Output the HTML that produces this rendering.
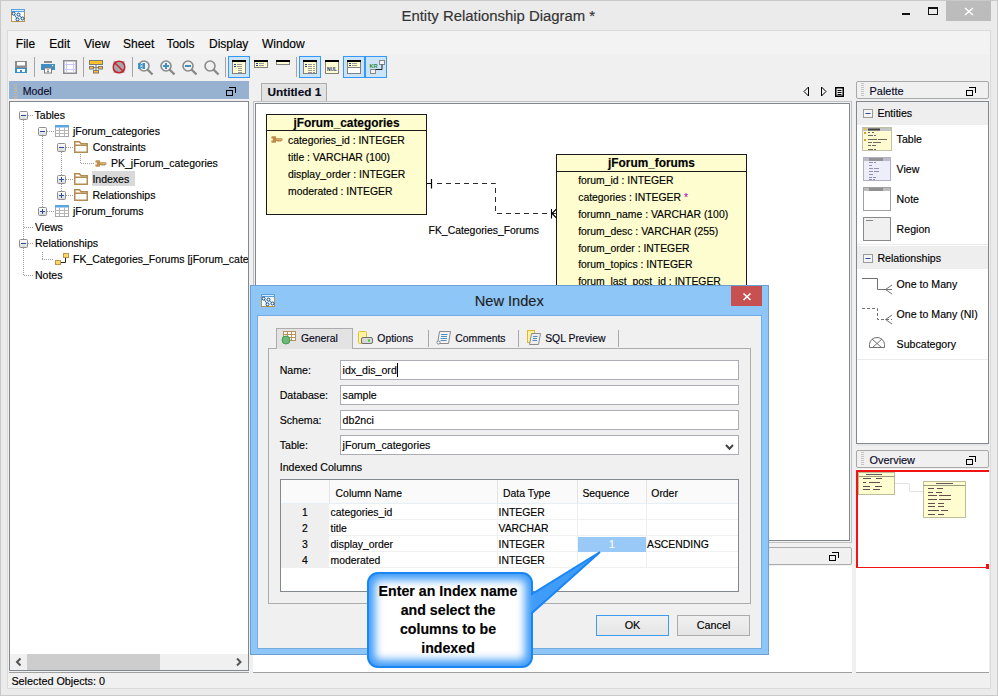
<!DOCTYPE html>
<html><head><meta charset="utf-8">
<style>
*{box-sizing:border-box;margin:0;padding:0}
html,body{width:998px;height:696px;overflow:hidden;background:#ebebeb;font-family:"Liberation Sans",sans-serif;font-size:11px;color:#000}
.a{position:absolute}
.t{position:absolute;white-space:nowrap;-webkit-text-stroke:0.15px currentColor}
svg{overflow:visible}
</style></head><body>

<div class="a" style="left:0px;top:0px;width:998px;height:696px;background:#ebebeb;border:1px solid #c9c9c9"></div>
<div class="a" style="left:7px;top:30px;width:984px;height:659px;background:#f0f0f0;border:1px solid #dadada"></div>
<div class="a" style="left:8px;top:31px;width:982px;height:23px;background:#f3f3f3"></div>
<svg class="a" style="left:11px;top:9px;" width="14" height="13" viewBox="0 0 14 13"><rect x="0.5" y="0.5" width="13" height="12" fill="#f4fbff" stroke="#b8944e"/><rect x="0" y="0" width="14" height="3" fill="#5aa0dc"/><rect x="1" y="1" width="12" height="1" fill="#d6ecfc"/><path d="M3 5 L6.5 10.5 M7.5 6 L11.5 9.5" stroke="#0d4a8a" stroke-width="0.8"/><g fill="#fff" stroke="#0d4a8a" stroke-width="1"><circle cx="2.6" cy="4.6" r="1.5"/><circle cx="7.5" cy="5.6" r="1.5"/><circle cx="6.5" cy="10.4" r="1.5"/><circle cx="11.5" cy="9.5" r="1.5"/></g></svg>
<div class="t" style="left:401.5px;top:7.44px;font-size:14.9px;line-height:19px;color:#333">Entity Relationship Diagram *</div>
<div class="a" style="left:902px;top:13px;width:8px;height:2px;background:#111"></div>
<div class="a" style="left:928px;top:7px;width:10px;height:8px;border:1px solid #111;border-top-width:2px"></div>
<div class="a" style="left:946px;top:1px;width:45px;height:20px;background:#bcbcbc"></div>
<svg class="a" style="left:964px;top:7px;" width="10" height="9" viewBox="0 0 10 9"><path d="M1 1 L9 8 M9 1 L1 8" stroke="#fff" stroke-width="1.4"/></svg>
<div class="t" style="left:15.8px;top:36.24px;font-size:12px;line-height:16px;">File</div>
<div class="t" style="left:49.3px;top:36.24px;font-size:12px;line-height:16px;">Edit</div>
<div class="t" style="left:84px;top:36.24px;font-size:12px;line-height:16px;">View</div>
<div class="t" style="left:123px;top:36.24px;font-size:12px;line-height:16px;">Sheet</div>
<div class="t" style="left:166.4px;top:36.24px;font-size:12px;line-height:16px;">Tools</div>
<div class="t" style="left:209px;top:36.24px;font-size:12px;line-height:16px;">Display</div>
<div class="t" style="left:262px;top:36.24px;font-size:12px;line-height:16px;">Window</div>
<div class="a" style="left:34px;top:57px;width:1px;height:20px;background:#a5a5a5"></div>
<div class="a" style="left:83px;top:57px;width:1px;height:20px;background:#a5a5a5"></div>
<div class="a" style="left:132px;top:57px;width:1px;height:20px;background:#a5a5a5"></div>
<div class="a" style="left:225px;top:57px;width:1px;height:20px;background:#a5a5a5"></div>
<div class="a" style="left:296px;top:57px;width:1px;height:20px;background:#a5a5a5"></div>
<svg class="a" style="left:15px;top:61px;" width="12" height="12" viewBox="0 0 12 12"><rect x="0" y="0" width="12" height="7" fill="#8c8c8c"/><rect x="2" y="1" width="8" height="3.5" fill="#fff" rx="0.5"/><rect x="0" y="7" width="12" height="5" fill="#3e8fc7"/><rect x="2" y="8" width="8" height="3" fill="#fff"/><rect x="5" y="9" width="2" height="2" fill="#3e8fc7"/></svg>
<svg class="a" style="left:41px;top:61px;" width="14" height="12" viewBox="0 0 14 12"><rect x="3" y="0" width="8" height="2" fill="#8c8c8c"/><rect x="0" y="3" width="14" height="6" fill="#3e8fc7"/><rect x="11" y="4" width="1.2" height="1.2" fill="#fff"/><rect x="3.5" y="7" width="7" height="5" fill="#fff" stroke="#7a7a7a" stroke-width="1"/><rect x="6" y="8.5" width="2" height="0.8" fill="#555"/><rect x="6" y="10.3" width="2" height="0.8" fill="#555"/></svg>
<svg class="a" style="left:63px;top:60px;" width="14" height="14" viewBox="0 0 14 14"><rect x="0.75" y="0.75" width="12.5" height="12.5" fill="#fff" stroke="#8a8a8a" stroke-width="1.5"/><path d="M3.5 1 V13 M10.5 1 V13 M1 4.5 H13 M1 9.5 H13" stroke="#c8c8ff" stroke-width="1"/></svg>
<svg class="a" style="left:89px;top:60px;" width="14" height="13" viewBox="0 0 14 13"><rect x="0.5" y="0.5" width="13" height="4" fill="#ffc125" stroke="#7a7a7a"/><rect x="0.5" y="6.5" width="4" height="2.5" fill="#ffc125" stroke="#7a7a7a"/><rect x="9.5" y="6.5" width="4" height="2.5" fill="#ffc125" stroke="#7a7a7a"/><rect x="4.5" y="10.5" width="5" height="2.5" fill="#ffc125" stroke="#7a7a7a"/><path d="M7 5 V10.5 M4.5 7.7 H9.5" stroke="#7a7a7a"/></svg>
<svg class="a" style="left:112px;top:60px;" width="14" height="14" viewBox="0 0 14 14"><rect x="1.5" y="1" width="11" height="12" fill="#a8a8a8"/><circle cx="7" cy="7" r="5.8" fill="none" stroke="#c8202f" stroke-width="1.5"/><path d="M3 3 L11 11" stroke="#c8202f" stroke-width="1.5"/></svg>
<svg class="a" style="left:136.9px;top:58.7px;" width="18" height="18" viewBox="0 0 18 18"><circle cx="7" cy="7" r="5" fill="none" stroke="#8a8a8a" stroke-width="1.6"/><path d="M10.5 10.5 L15.5 15.5" stroke="#8a8a8a" stroke-width="2.4"/><rect x="1" y="4" width="2.5" height="6" fill="#3d8fc6"/><rect x="5.5" y="4" width="2.5" height="6" fill="#3d8fc6"/><rect x="3.5" y="5" width="2" height="1.3" fill="#3d8fc6"/><rect x="3.5" y="7.7" width="2" height="1.3" fill="#3d8fc6"/></svg>
<svg class="a" style="left:159px;top:58.7px;" width="18" height="18" viewBox="0 0 18 18"><circle cx="7" cy="7" r="5" fill="none" stroke="#8a8a8a" stroke-width="1.6"/><path d="M10.5 10.5 L15.5 15.5" stroke="#8a8a8a" stroke-width="2.4"/><path d="M7 4 V10 M4 7 H10" stroke="#3d8fc6" stroke-width="2"/></svg>
<svg class="a" style="left:180.9px;top:58.7px;" width="18" height="18" viewBox="0 0 18 18"><circle cx="7" cy="7" r="5" fill="none" stroke="#8a8a8a" stroke-width="1.6"/><path d="M10.5 10.5 L15.5 15.5" stroke="#8a8a8a" stroke-width="2.4"/><path d="M4 7 H10" stroke="#3d8fc6" stroke-width="2"/></svg>
<svg class="a" style="left:202.7px;top:58.7px;" width="18" height="18" viewBox="0 0 18 18"><circle cx="7" cy="7" r="5" fill="none" stroke="#8a8a8a" stroke-width="1.6"/><path d="M10.5 10.5 L15.5 15.5" stroke="#8a8a8a" stroke-width="2.4"/></svg>
<div class="a" style="left:228px;top:56px;width:22px;height:22px;background:#cce4f7;border:1px solid #3399ff"></div>
<div class="a" style="left:299px;top:56px;width:22px;height:22px;background:#cce4f7;border:1px solid #3399ff"></div>
<div class="a" style="left:343px;top:56px;width:22px;height:22px;background:#cce4f7;border:1px solid #3399ff"></div>
<div class="a" style="left:365px;top:56px;width:22px;height:22px;background:#cce4f7;border:1px solid #3399ff"></div>
<svg class="a" style="left:232px;top:60px;" width="14" height="14" viewBox="0 0 14 14"><rect x="0.5" y="0.5" width="13" height="13" fill="#fffbd0" stroke="#808080"/><rect x="0" y="0" width="14" height="2" fill="#000"/><rect x="2" y="4" width="2" height="1" fill="#1f3f8f"/><rect x="2" y="6" width="2" height="1" fill="#1f3f8f"/><path d="M5 4.5 H10 M5 6.5 H10 M6 8.5 H10 M6 10.5 H10 M6 12.5 H10" stroke="#999" stroke-width="1"/></svg>
<svg class="a" style="left:254px;top:60px;" width="14" height="8" viewBox="0 0 14 8"><rect x="0.5" y="0.5" width="13" height="7" fill="#fffbd0" stroke="#808080"/><rect x="0" y="0" width="14" height="2" fill="#000"/><rect x="2" y="3" width="2" height="1" fill="#1f3f8f"/><rect x="2" y="5" width="2" height="1" fill="#1f3f8f"/><path d="M5 3.5 H10 M5 5.5 H10" stroke="#999" stroke-width="1"/></svg>
<svg class="a" style="left:276px;top:60px;" width="14" height="5" viewBox="0 0 14 5"><rect x="0.5" y="0.5" width="13" height="4" fill="#fffbd0" stroke="#808080"/><rect x="0" y="0" width="14" height="2" fill="#000"/></svg>
<svg class="a" style="left:303px;top:60px;" width="14" height="14" viewBox="0 0 14 14"><rect x="0.5" y="0.5" width="13" height="13" fill="#fffbd0" stroke="#808080"/><rect x="0" y="0" width="14" height="2" fill="#000"/><path d="M5 4.5 H9 M5 6.5 H9 M5 8.5 H9 M5 10.5 H9 M5 12.5 H9 M10 4.5 H12 M10 6.5 H12 M10 8.5 H12 M10 10.5 H12 M10 12.5 H12" stroke="#999" stroke-width="1"/><rect x="2" y="4" width="2" height="1" fill="#1f3f8f"/><rect x="2" y="6" width="2" height="1" fill="#1f3f8f"/></svg>
<svg class="a" style="left:325px;top:60px;" width="14" height="14" viewBox="0 0 14 14"><rect x="0.5" y="0.5" width="13" height="13" fill="#fffbd0" stroke="#808080"/><rect x="0" y="0" width="14" height="2" fill="#000"/><text x="2" y="10.5" font-size="6" font-weight="bold" textLength="10" lengthAdjust="spacingAndGlyphs" fill="#17306f" font-family="Liberation Sans">NUL</text></svg>
<svg class="a" style="left:347px;top:60px;" width="14" height="14" viewBox="0 0 14 14"><rect x="0.5" y="0.5" width="13" height="13" fill="#fff" stroke="#808080"/><rect x="0.5" y="0.5" width="13" height="7" fill="#fffbd0" stroke="#808080"/><rect x="0" y="0" width="14" height="2" fill="#000"/><rect x="2" y="3" width="2" height="1" fill="#1f3f8f"/><rect x="2" y="5" width="2" height="1" fill="#1f3f8f"/><path d="M5 3.5 H10 M5 5.5 H10" stroke="#999" stroke-width="1"/></svg>
<svg class="a" style="left:369px;top:59px;" width="17" height="16" viewBox="0 0 17 16"><rect x="10.5" y="1.5" width="5" height="4" fill="#f4f4f4" stroke="#888"/><rect x="1.5" y="10.5" width="5" height="4" fill="#f4f4f4" stroke="#888"/><path d="M13 5.5 V10.5 H6.5" fill="none" stroke="#222" stroke-width="1"/><text x="0.5" y="8.5" font-size="6" font-weight="bold" textLength="8" lengthAdjust="spacingAndGlyphs" fill="#2a8a2a" font-family="Liberation Sans">KR</text></svg>
<div class="a" style="left:9px;top:81px;width:240px;height:18px;background:#97b2d1"></div>
<svg class="a" style="left:14px;top:84px;" width="3" height="15" viewBox="0 0 3 15"><rect x="0" y="0" width="3" height="1" fill="#c8b89a"/><rect x="0" y="2" width="3" height="1" fill="#c8b89a"/><rect x="0" y="4" width="3" height="1" fill="#c8b89a"/><rect x="0" y="6" width="3" height="1" fill="#c8b89a"/><rect x="0" y="8" width="3" height="1" fill="#c8b89a"/><rect x="0" y="10" width="3" height="1" fill="#c8b89a"/><rect x="0" y="12" width="3" height="1" fill="#c8b89a"/><rect x="0" y="14" width="3" height="1" fill="#c8b89a"/></svg>
<div class="t" style="left:22.8px;top:84.23px;font-size:10.6px;line-height:14px;color:#0a0a28">Model</div>
<svg class="a" style="left:226px;top:87px;" width="11" height="10" viewBox="0 0 11 10"><path d="M3 0 H10 V6 H9 V1 H3 Z" fill="#000"/><path d="M0 3 H7 V9 H0 Z M1 4 V8 H6 V4 Z" fill="#000" fill-rule="evenodd"/></svg>
<div class="a" style="left:9px;top:101px;width:240px;height:570px;background:#fff;border:1px solid #828790"></div>
<div class="a" style="left:10px;top:654px;width:238px;height:16px;background:#f0f0f0"></div>
<div class="a" style="left:27px;top:654px;width:133px;height:16px;background:#cdcdcd"></div>
<svg class="a" style="left:14px;top:657px;" width="10" height="10" viewBox="0 0 10 10"><path d="M6.5 1.5 L3 5 L6.5 8.5" fill="none" stroke="#555" stroke-width="2"/></svg>
<svg class="a" style="left:234px;top:657px;" width="10" height="10" viewBox="0 0 10 10"><path d="M3 1.5 L6.5 5 L3 8.5" fill="none" stroke="#555" stroke-width="2"/></svg>
<div class="a" style="left:9px;top:672px;width:240px;height:1px;background:#a0a0a0"></div>
<div class="t" style="left:11.4px;top:673.56px;font-size:10.8px;line-height:14px;">Selected Objects: 0</div>
<svg class="a" style="left:23px;top:120px;" width="1" height="156" viewBox="0 0 1 156"><rect x="0" y="0" width="1" height="1" fill="#a0a0a0"/><rect x="0" y="2" width="1" height="1" fill="#a0a0a0"/><rect x="0" y="4" width="1" height="1" fill="#a0a0a0"/><rect x="0" y="6" width="1" height="1" fill="#a0a0a0"/><rect x="0" y="8" width="1" height="1" fill="#a0a0a0"/><rect x="0" y="10" width="1" height="1" fill="#a0a0a0"/><rect x="0" y="12" width="1" height="1" fill="#a0a0a0"/><rect x="0" y="14" width="1" height="1" fill="#a0a0a0"/><rect x="0" y="16" width="1" height="1" fill="#a0a0a0"/><rect x="0" y="18" width="1" height="1" fill="#a0a0a0"/><rect x="0" y="20" width="1" height="1" fill="#a0a0a0"/><rect x="0" y="22" width="1" height="1" fill="#a0a0a0"/><rect x="0" y="24" width="1" height="1" fill="#a0a0a0"/><rect x="0" y="26" width="1" height="1" fill="#a0a0a0"/><rect x="0" y="28" width="1" height="1" fill="#a0a0a0"/><rect x="0" y="30" width="1" height="1" fill="#a0a0a0"/><rect x="0" y="32" width="1" height="1" fill="#a0a0a0"/><rect x="0" y="34" width="1" height="1" fill="#a0a0a0"/><rect x="0" y="36" width="1" height="1" fill="#a0a0a0"/><rect x="0" y="38" width="1" height="1" fill="#a0a0a0"/><rect x="0" y="40" width="1" height="1" fill="#a0a0a0"/><rect x="0" y="42" width="1" height="1" fill="#a0a0a0"/><rect x="0" y="44" width="1" height="1" fill="#a0a0a0"/><rect x="0" y="46" width="1" height="1" fill="#a0a0a0"/><rect x="0" y="48" width="1" height="1" fill="#a0a0a0"/><rect x="0" y="50" width="1" height="1" fill="#a0a0a0"/><rect x="0" y="52" width="1" height="1" fill="#a0a0a0"/><rect x="0" y="54" width="1" height="1" fill="#a0a0a0"/><rect x="0" y="56" width="1" height="1" fill="#a0a0a0"/><rect x="0" y="58" width="1" height="1" fill="#a0a0a0"/><rect x="0" y="60" width="1" height="1" fill="#a0a0a0"/><rect x="0" y="62" width="1" height="1" fill="#a0a0a0"/><rect x="0" y="64" width="1" height="1" fill="#a0a0a0"/><rect x="0" y="66" width="1" height="1" fill="#a0a0a0"/><rect x="0" y="68" width="1" height="1" fill="#a0a0a0"/><rect x="0" y="70" width="1" height="1" fill="#a0a0a0"/><rect x="0" y="72" width="1" height="1" fill="#a0a0a0"/><rect x="0" y="74" width="1" height="1" fill="#a0a0a0"/><rect x="0" y="76" width="1" height="1" fill="#a0a0a0"/><rect x="0" y="78" width="1" height="1" fill="#a0a0a0"/><rect x="0" y="80" width="1" height="1" fill="#a0a0a0"/><rect x="0" y="82" width="1" height="1" fill="#a0a0a0"/><rect x="0" y="84" width="1" height="1" fill="#a0a0a0"/><rect x="0" y="86" width="1" height="1" fill="#a0a0a0"/><rect x="0" y="88" width="1" height="1" fill="#a0a0a0"/><rect x="0" y="90" width="1" height="1" fill="#a0a0a0"/><rect x="0" y="92" width="1" height="1" fill="#a0a0a0"/><rect x="0" y="94" width="1" height="1" fill="#a0a0a0"/><rect x="0" y="96" width="1" height="1" fill="#a0a0a0"/><rect x="0" y="98" width="1" height="1" fill="#a0a0a0"/><rect x="0" y="100" width="1" height="1" fill="#a0a0a0"/><rect x="0" y="102" width="1" height="1" fill="#a0a0a0"/><rect x="0" y="104" width="1" height="1" fill="#a0a0a0"/><rect x="0" y="106" width="1" height="1" fill="#a0a0a0"/><rect x="0" y="108" width="1" height="1" fill="#a0a0a0"/><rect x="0" y="110" width="1" height="1" fill="#a0a0a0"/><rect x="0" y="112" width="1" height="1" fill="#a0a0a0"/><rect x="0" y="114" width="1" height="1" fill="#a0a0a0"/><rect x="0" y="116" width="1" height="1" fill="#a0a0a0"/><rect x="0" y="118" width="1" height="1" fill="#a0a0a0"/><rect x="0" y="120" width="1" height="1" fill="#a0a0a0"/><rect x="0" y="122" width="1" height="1" fill="#a0a0a0"/><rect x="0" y="124" width="1" height="1" fill="#a0a0a0"/><rect x="0" y="126" width="1" height="1" fill="#a0a0a0"/><rect x="0" y="128" width="1" height="1" fill="#a0a0a0"/><rect x="0" y="130" width="1" height="1" fill="#a0a0a0"/><rect x="0" y="132" width="1" height="1" fill="#a0a0a0"/><rect x="0" y="134" width="1" height="1" fill="#a0a0a0"/><rect x="0" y="136" width="1" height="1" fill="#a0a0a0"/><rect x="0" y="138" width="1" height="1" fill="#a0a0a0"/><rect x="0" y="140" width="1" height="1" fill="#a0a0a0"/><rect x="0" y="142" width="1" height="1" fill="#a0a0a0"/><rect x="0" y="144" width="1" height="1" fill="#a0a0a0"/><rect x="0" y="146" width="1" height="1" fill="#a0a0a0"/><rect x="0" y="148" width="1" height="1" fill="#a0a0a0"/><rect x="0" y="150" width="1" height="1" fill="#a0a0a0"/><rect x="0" y="152" width="1" height="1" fill="#a0a0a0"/><rect x="0" y="154" width="1" height="1" fill="#a0a0a0"/></svg>
<svg class="a" style="left:42px;top:136px;" width="1" height="76" viewBox="0 0 1 76"><rect x="0" y="0" width="1" height="1" fill="#a0a0a0"/><rect x="0" y="2" width="1" height="1" fill="#a0a0a0"/><rect x="0" y="4" width="1" height="1" fill="#a0a0a0"/><rect x="0" y="6" width="1" height="1" fill="#a0a0a0"/><rect x="0" y="8" width="1" height="1" fill="#a0a0a0"/><rect x="0" y="10" width="1" height="1" fill="#a0a0a0"/><rect x="0" y="12" width="1" height="1" fill="#a0a0a0"/><rect x="0" y="14" width="1" height="1" fill="#a0a0a0"/><rect x="0" y="16" width="1" height="1" fill="#a0a0a0"/><rect x="0" y="18" width="1" height="1" fill="#a0a0a0"/><rect x="0" y="20" width="1" height="1" fill="#a0a0a0"/><rect x="0" y="22" width="1" height="1" fill="#a0a0a0"/><rect x="0" y="24" width="1" height="1" fill="#a0a0a0"/><rect x="0" y="26" width="1" height="1" fill="#a0a0a0"/><rect x="0" y="28" width="1" height="1" fill="#a0a0a0"/><rect x="0" y="30" width="1" height="1" fill="#a0a0a0"/><rect x="0" y="32" width="1" height="1" fill="#a0a0a0"/><rect x="0" y="34" width="1" height="1" fill="#a0a0a0"/><rect x="0" y="36" width="1" height="1" fill="#a0a0a0"/><rect x="0" y="38" width="1" height="1" fill="#a0a0a0"/><rect x="0" y="40" width="1" height="1" fill="#a0a0a0"/><rect x="0" y="42" width="1" height="1" fill="#a0a0a0"/><rect x="0" y="44" width="1" height="1" fill="#a0a0a0"/><rect x="0" y="46" width="1" height="1" fill="#a0a0a0"/><rect x="0" y="48" width="1" height="1" fill="#a0a0a0"/><rect x="0" y="50" width="1" height="1" fill="#a0a0a0"/><rect x="0" y="52" width="1" height="1" fill="#a0a0a0"/><rect x="0" y="54" width="1" height="1" fill="#a0a0a0"/><rect x="0" y="56" width="1" height="1" fill="#a0a0a0"/><rect x="0" y="58" width="1" height="1" fill="#a0a0a0"/><rect x="0" y="60" width="1" height="1" fill="#a0a0a0"/><rect x="0" y="62" width="1" height="1" fill="#a0a0a0"/><rect x="0" y="64" width="1" height="1" fill="#a0a0a0"/><rect x="0" y="66" width="1" height="1" fill="#a0a0a0"/><rect x="0" y="68" width="1" height="1" fill="#a0a0a0"/><rect x="0" y="70" width="1" height="1" fill="#a0a0a0"/><rect x="0" y="72" width="1" height="1" fill="#a0a0a0"/><rect x="0" y="74" width="1" height="1" fill="#a0a0a0"/></svg>
<svg class="a" style="left:61px;top:152px;" width="1" height="44" viewBox="0 0 1 44"><rect x="0" y="0" width="1" height="1" fill="#a0a0a0"/><rect x="0" y="2" width="1" height="1" fill="#a0a0a0"/><rect x="0" y="4" width="1" height="1" fill="#a0a0a0"/><rect x="0" y="6" width="1" height="1" fill="#a0a0a0"/><rect x="0" y="8" width="1" height="1" fill="#a0a0a0"/><rect x="0" y="10" width="1" height="1" fill="#a0a0a0"/><rect x="0" y="12" width="1" height="1" fill="#a0a0a0"/><rect x="0" y="14" width="1" height="1" fill="#a0a0a0"/><rect x="0" y="16" width="1" height="1" fill="#a0a0a0"/><rect x="0" y="18" width="1" height="1" fill="#a0a0a0"/><rect x="0" y="20" width="1" height="1" fill="#a0a0a0"/><rect x="0" y="22" width="1" height="1" fill="#a0a0a0"/><rect x="0" y="24" width="1" height="1" fill="#a0a0a0"/><rect x="0" y="26" width="1" height="1" fill="#a0a0a0"/><rect x="0" y="28" width="1" height="1" fill="#a0a0a0"/><rect x="0" y="30" width="1" height="1" fill="#a0a0a0"/><rect x="0" y="32" width="1" height="1" fill="#a0a0a0"/><rect x="0" y="34" width="1" height="1" fill="#a0a0a0"/><rect x="0" y="36" width="1" height="1" fill="#a0a0a0"/><rect x="0" y="38" width="1" height="1" fill="#a0a0a0"/><rect x="0" y="40" width="1" height="1" fill="#a0a0a0"/><rect x="0" y="42" width="1" height="1" fill="#a0a0a0"/></svg>
<svg class="a" style="left:80px;top:152px;" width="1" height="12" viewBox="0 0 1 12"><rect x="0" y="0" width="1" height="1" fill="#a0a0a0"/><rect x="0" y="2" width="1" height="1" fill="#a0a0a0"/><rect x="0" y="4" width="1" height="1" fill="#a0a0a0"/><rect x="0" y="6" width="1" height="1" fill="#a0a0a0"/><rect x="0" y="8" width="1" height="1" fill="#a0a0a0"/><rect x="0" y="10" width="1" height="1" fill="#a0a0a0"/></svg>
<svg class="a" style="left:42px;top:252px;" width="1" height="8" viewBox="0 0 1 8"><rect x="0" y="0" width="1" height="1" fill="#a0a0a0"/><rect x="0" y="2" width="1" height="1" fill="#a0a0a0"/><rect x="0" y="4" width="1" height="1" fill="#a0a0a0"/><rect x="0" y="6" width="1" height="1" fill="#a0a0a0"/></svg>
<svg class="a" style="left:28px;top:115px;" width="6" height="1" viewBox="0 0 6 1"><rect x="0" y="0" width="1" height="1" fill="#a0a0a0"/><rect x="2" y="0" width="1" height="1" fill="#a0a0a0"/><rect x="4" y="0" width="1" height="1" fill="#a0a0a0"/></svg>
<svg class="a" style="left:24px;top:227px;" width="10" height="1" viewBox="0 0 10 1"><rect x="0" y="0" width="1" height="1" fill="#a0a0a0"/><rect x="2" y="0" width="1" height="1" fill="#a0a0a0"/><rect x="4" y="0" width="1" height="1" fill="#a0a0a0"/><rect x="6" y="0" width="1" height="1" fill="#a0a0a0"/><rect x="8" y="0" width="1" height="1" fill="#a0a0a0"/></svg>
<svg class="a" style="left:28px;top:243px;" width="6" height="1" viewBox="0 0 6 1"><rect x="0" y="0" width="1" height="1" fill="#a0a0a0"/><rect x="2" y="0" width="1" height="1" fill="#a0a0a0"/><rect x="4" y="0" width="1" height="1" fill="#a0a0a0"/></svg>
<svg class="a" style="left:24px;top:275px;" width="10" height="1" viewBox="0 0 10 1"><rect x="0" y="0" width="1" height="1" fill="#a0a0a0"/><rect x="2" y="0" width="1" height="1" fill="#a0a0a0"/><rect x="4" y="0" width="1" height="1" fill="#a0a0a0"/><rect x="6" y="0" width="1" height="1" fill="#a0a0a0"/><rect x="8" y="0" width="1" height="1" fill="#a0a0a0"/></svg>
<svg class="a" style="left:47px;top:131px;" width="8" height="1" viewBox="0 0 8 1"><rect x="0" y="0" width="1" height="1" fill="#a0a0a0"/><rect x="2" y="0" width="1" height="1" fill="#a0a0a0"/><rect x="4" y="0" width="1" height="1" fill="#a0a0a0"/><rect x="6" y="0" width="1" height="1" fill="#a0a0a0"/></svg>
<svg class="a" style="left:47px;top:211px;" width="8" height="1" viewBox="0 0 8 1"><rect x="0" y="0" width="1" height="1" fill="#a0a0a0"/><rect x="2" y="0" width="1" height="1" fill="#a0a0a0"/><rect x="4" y="0" width="1" height="1" fill="#a0a0a0"/><rect x="6" y="0" width="1" height="1" fill="#a0a0a0"/></svg>
<svg class="a" style="left:66px;top:147px;" width="7" height="1" viewBox="0 0 7 1"><rect x="0" y="0" width="1" height="1" fill="#a0a0a0"/><rect x="2" y="0" width="1" height="1" fill="#a0a0a0"/><rect x="4" y="0" width="1" height="1" fill="#a0a0a0"/><rect x="6" y="0" width="1" height="1" fill="#a0a0a0"/></svg>
<svg class="a" style="left:66px;top:179px;" width="7" height="1" viewBox="0 0 7 1"><rect x="0" y="0" width="1" height="1" fill="#a0a0a0"/><rect x="2" y="0" width="1" height="1" fill="#a0a0a0"/><rect x="4" y="0" width="1" height="1" fill="#a0a0a0"/><rect x="6" y="0" width="1" height="1" fill="#a0a0a0"/></svg>
<svg class="a" style="left:66px;top:195px;" width="7" height="1" viewBox="0 0 7 1"><rect x="0" y="0" width="1" height="1" fill="#a0a0a0"/><rect x="2" y="0" width="1" height="1" fill="#a0a0a0"/><rect x="4" y="0" width="1" height="1" fill="#a0a0a0"/><rect x="6" y="0" width="1" height="1" fill="#a0a0a0"/></svg>
<svg class="a" style="left:81px;top:163px;" width="14" height="1" viewBox="0 0 14 1"><rect x="0" y="0" width="1" height="1" fill="#a0a0a0"/><rect x="2" y="0" width="1" height="1" fill="#a0a0a0"/><rect x="4" y="0" width="1" height="1" fill="#a0a0a0"/><rect x="6" y="0" width="1" height="1" fill="#a0a0a0"/><rect x="8" y="0" width="1" height="1" fill="#a0a0a0"/><rect x="10" y="0" width="1" height="1" fill="#a0a0a0"/><rect x="12" y="0" width="1" height="1" fill="#a0a0a0"/></svg>
<svg class="a" style="left:42px;top:259px;" width="12" height="1" viewBox="0 0 12 1"><rect x="0" y="0" width="1" height="1" fill="#a0a0a0"/><rect x="2" y="0" width="1" height="1" fill="#a0a0a0"/><rect x="4" y="0" width="1" height="1" fill="#a0a0a0"/><rect x="6" y="0" width="1" height="1" fill="#a0a0a0"/><rect x="8" y="0" width="1" height="1" fill="#a0a0a0"/><rect x="10" y="0" width="1" height="1" fill="#a0a0a0"/></svg>
<svg class="a" style="left:19.0px;top:111px;" width="9" height="9" viewBox="0 0 9 9"><defs><linearGradient id="eg" x1="0" y1="0" x2="0" y2="1"><stop offset="0" stop-color="#fff"/><stop offset="1" stop-color="#d8d8d8"/></linearGradient></defs><rect x="0.5" y="0.5" width="8" height="8" rx="1" fill="url(#eg)" stroke="#8f8f8f"/><rect x="2" y="4" width="5" height="1" fill="#2a4a9a"/></svg>
<svg class="a" style="left:38.0px;top:127px;" width="9" height="9" viewBox="0 0 9 9"><defs><linearGradient id="eg" x1="0" y1="0" x2="0" y2="1"><stop offset="0" stop-color="#fff"/><stop offset="1" stop-color="#d8d8d8"/></linearGradient></defs><rect x="0.5" y="0.5" width="8" height="8" rx="1" fill="url(#eg)" stroke="#8f8f8f"/><rect x="2" y="4" width="5" height="1" fill="#2a4a9a"/></svg>
<svg class="a" style="left:57.0px;top:143px;" width="9" height="9" viewBox="0 0 9 9"><defs><linearGradient id="eg" x1="0" y1="0" x2="0" y2="1"><stop offset="0" stop-color="#fff"/><stop offset="1" stop-color="#d8d8d8"/></linearGradient></defs><rect x="0.5" y="0.5" width="8" height="8" rx="1" fill="url(#eg)" stroke="#8f8f8f"/><rect x="2" y="4" width="5" height="1" fill="#2a4a9a"/></svg>
<svg class="a" style="left:57.0px;top:175px;" width="9" height="9" viewBox="0 0 9 9"><defs><linearGradient id="eg" x1="0" y1="0" x2="0" y2="1"><stop offset="0" stop-color="#fff"/><stop offset="1" stop-color="#d8d8d8"/></linearGradient></defs><rect x="0.5" y="0.5" width="8" height="8" rx="1" fill="url(#eg)" stroke="#8f8f8f"/><rect x="2" y="4" width="5" height="1" fill="#2a4a9a"/><rect x="4" y="2" width="1" height="5" fill="#2a4a9a"/></svg>
<svg class="a" style="left:57.0px;top:191px;" width="9" height="9" viewBox="0 0 9 9"><defs><linearGradient id="eg" x1="0" y1="0" x2="0" y2="1"><stop offset="0" stop-color="#fff"/><stop offset="1" stop-color="#d8d8d8"/></linearGradient></defs><rect x="0.5" y="0.5" width="8" height="8" rx="1" fill="url(#eg)" stroke="#8f8f8f"/><rect x="2" y="4" width="5" height="1" fill="#2a4a9a"/><rect x="4" y="2" width="1" height="5" fill="#2a4a9a"/></svg>
<svg class="a" style="left:38.0px;top:207px;" width="9" height="9" viewBox="0 0 9 9"><defs><linearGradient id="eg" x1="0" y1="0" x2="0" y2="1"><stop offset="0" stop-color="#fff"/><stop offset="1" stop-color="#d8d8d8"/></linearGradient></defs><rect x="0.5" y="0.5" width="8" height="8" rx="1" fill="url(#eg)" stroke="#8f8f8f"/><rect x="2" y="4" width="5" height="1" fill="#2a4a9a"/><rect x="4" y="2" width="1" height="5" fill="#2a4a9a"/></svg>
<svg class="a" style="left:19.0px;top:239px;" width="9" height="9" viewBox="0 0 9 9"><defs><linearGradient id="eg" x1="0" y1="0" x2="0" y2="1"><stop offset="0" stop-color="#fff"/><stop offset="1" stop-color="#d8d8d8"/></linearGradient></defs><rect x="0.5" y="0.5" width="8" height="8" rx="1" fill="url(#eg)" stroke="#8f8f8f"/><rect x="2" y="4" width="5" height="1" fill="#2a4a9a"/></svg>
<svg class="a" style="left:55px;top:125px;" width="14" height="12" viewBox="0 0 14 12"><rect x="0.5" y="0.5" width="13" height="11" fill="#fff" stroke="#a8a8a8"/><rect x="0" y="0" width="14" height="2.5" fill="#5aa8e0"/><path d="M0.5 5.5 H13.5 M0.5 8.5 H13.5 M4.5 2.5 V11.5 M9.5 2.5 V11.5" stroke="#b4b4b4" stroke-width="1"/></svg>
<svg class="a" style="left:55px;top:205px;" width="14" height="12" viewBox="0 0 14 12"><rect x="0.5" y="0.5" width="13" height="11" fill="#fff" stroke="#a8a8a8"/><rect x="0" y="0" width="14" height="2.5" fill="#5aa8e0"/><path d="M0.5 5.5 H13.5 M0.5 8.5 H13.5 M4.5 2.5 V11.5 M9.5 2.5 V11.5" stroke="#b4b4b4" stroke-width="1"/></svg>
<svg class="a" style="left:74px;top:141px;" width="15" height="13" viewBox="0 0 15 13"><path d="M0.75 11.25 V0.75 H5.5 L7 2.75 H13.25 V11.25 Z" fill="#fff" stroke="#b48c50" stroke-width="1.5"/><path d="M0.75 4.25 H13.25" stroke="#b48c50" stroke-width="1.5"/></svg>
<svg class="a" style="left:74px;top:173px;" width="15" height="13" viewBox="0 0 15 13"><path d="M0.75 11.25 V0.75 H5.5 L7 2.75 H13.25 V11.25 Z" fill="#fff" stroke="#b48c50" stroke-width="1.5"/><path d="M0.75 4.25 H13.25" stroke="#b48c50" stroke-width="1.5"/></svg>
<svg class="a" style="left:74px;top:189px;" width="15" height="13" viewBox="0 0 15 13"><path d="M0.75 11.25 V0.75 H5.5 L7 2.75 H13.25 V11.25 Z" fill="#fff" stroke="#b48c50" stroke-width="1.5"/><path d="M0.75 4.25 H13.25" stroke="#b48c50" stroke-width="1.5"/></svg>
<svg class="a" style="left:95px;top:159.5px;" width="12" height="8" viewBox="0 0 12 8"><path d="M1.5 0.3 H4 Q5.2 0.3 5.2 1.5 V2.3 H10.3 Q11.6 2.3 11.6 3.6 Q11.6 4.9 10.3 4.9 H9.6 V6 H8.6 V4.9 H7.6 V6 H6.6 V4.9 H5.2 V5.6 Q5.2 6.8 4 6.8 H1.5 Q0.3 6.8 0.3 5.6 V4.6 H1.8 V2.5 H0.3 V1.5 Q0.3 0.3 1.5 0.3 Z" fill="#c09050"/><path d="M5.5 3.6 H10.5" stroke="#e8c890" stroke-width="0.6"/></svg>
<svg class="a" style="left:55px;top:253px;" width="15" height="13" viewBox="0 0 15 13"><rect x="8.5" y="0.5" width="5" height="4" fill="#ffd860" stroke="#c09050"/><rect x="0.5" y="7.5" width="5" height="4" fill="#ffd860" stroke="#c09050"/><path d="M10.5 5 V9.5 H6" fill="none" stroke="#222"/></svg>
<div class="a" style="left:92px;top:171px;width:43px;height:15px;background:#d9d9d9"></div>
<div class="t" style="left:34.6px;top:108.06px;font-size:10.5px;line-height:14px;">Tables</div>
<div class="t" style="left:73px;top:124.06px;font-size:10.5px;line-height:14px;">jForum_categories</div>
<div class="t" style="left:92.7px;top:140.06px;font-size:10.5px;line-height:14px;">Constraints</div>
<div class="t" style="left:111px;top:156.06px;font-size:10.5px;line-height:14px;">PK_jForum_categories</div>
<div class="t" style="left:92.4px;top:172.06px;font-size:10.5px;line-height:14px;">Indexes</div>
<div class="t" style="left:92.4px;top:188.06px;font-size:10.5px;line-height:14px;">Relationships</div>
<div class="t" style="left:73px;top:204.06px;font-size:10.5px;line-height:14px;">jForum_forums</div>
<div class="t" style="left:35px;top:220.06px;font-size:10.5px;line-height:14px;">Views</div>
<div class="t" style="left:35px;top:236.06px;font-size:10.5px;line-height:14px;">Relationships</div>
<div class="t" style="left:35px;top:268.06px;font-size:10.5px;line-height:14px;">Notes</div>
<div class="a" style="left:73px;top:250px;width:175px;height:18px;overflow:hidden">
<div class="t" style="left:0px;top:2.06px;font-size:10.5px;line-height:14px;">FK_Categories_Forums [jForum_categories]</div>
</div>
<div class="a" style="left:261px;top:83px;width:66px;height:19px;background:#e3e3e3;border:1px solid #acacac;border-bottom:none"></div>
<div class="t" style="left:267.5px;top:84.51px;font-size:11.8px;line-height:15px;font-weight:bold;color:#0a0a20">Untitled 1</div>
<svg class="a" style="left:803px;top:86px;" width="7" height="11" viewBox="0 0 7 11"><path d="M5.5 1 V10 L1 5.5 Z" fill="none" stroke="#000" stroke-width="1"/></svg>
<svg class="a" style="left:820px;top:86px;" width="7" height="11" viewBox="0 0 7 11"><path d="M1.5 1 V10 L6 5.5 Z" fill="none" stroke="#000" stroke-width="1"/></svg>
<svg class="a" style="left:835px;top:87px;" width="9" height="10" viewBox="0 0 9 10"><path d="M0 0 H9 V10 H0 Z M1.5 1.5 V8.5 H7.5 V1.5 Z" fill="#000" fill-rule="evenodd"/><path d="M2.5 3.5 H6.5 M2.5 5.5 H6.5 M2.5 7.5 H6.5" stroke="#000" stroke-width="1"/></svg>
<div class="a" style="left:253px;top:101px;width:599px;height:442px;background:#f0f0f0;border:1px solid #c2c2c2"></div>
<div class="a" style="left:255px;top:103px;width:595px;height:438px;background:#fff;border:1px solid #828790"></div>
<div class="a" style="left:266px;top:114px;width:161px;height:101px;background:#fdfdcf;border:1px solid #1a1a1a"></div>
<div class="a" style="left:266px;top:130px;width:161px;height:1px;background:#1a1a1a"></div>
<div class="t" style="left:46.5px;width:600px;text-align:center;top:116.09px;font-size:11.85px;line-height:15px;font-weight:bold">jForum_categories</div>
<svg class="a" style="left:271px;top:136px;" width="12" height="8" viewBox="0 0 12 8"><path d="M1.5 0.3 H4 Q5.2 0.3 5.2 1.5 V2.3 H10.3 Q11.6 2.3 11.6 3.6 Q11.6 4.9 10.3 4.9 H9.6 V6 H8.6 V4.9 H7.6 V6 H6.6 V4.9 H5.2 V5.6 Q5.2 6.8 4 6.8 H1.5 Q0.3 6.8 0.3 5.6 V4.6 H1.8 V2.5 H0.3 V1.5 Q0.3 0.3 1.5 0.3 Z" fill="#c08a48"/><path d="M5.5 3.6 H10.5" stroke="#e8c890" stroke-width="0.6"/></svg>
<div class="t" style="left:288px;top:134.10px;font-size:10.4px;line-height:14px;">categories_id : INTEGER</div>
<div class="t" style="left:288px;top:150.90px;font-size:10.4px;line-height:14px;">title : VARCHAR (100)</div>
<div class="t" style="left:288px;top:167.70px;font-size:10.4px;line-height:14px;">display_order : INTEGER</div>
<div class="t" style="left:288px;top:184.50px;font-size:10.4px;line-height:14px;">moderated : INTEGER</div>
<svg class="a" style="left:426px;top:178px;" width="132" height="42" viewBox="0 0 132 42"><path d="M1 5.5 H6 M5.5 1 V10.5" stroke="#000" stroke-width="1.2" fill="none"/><path d="M11 5.5 H69.5 V35.5 H130" stroke="#2a2a2a" stroke-width="1" fill="none" stroke-dasharray="5,4"/><path d="M125.5 31 V40.5 M126 35.5 L130.5 31 M126 35.5 L130.5 40" stroke="#000" stroke-width="1.1" fill="none"/></svg>
<div class="t" style="left:428.6px;top:223.60px;font-size:10.4px;line-height:14px;">FK_Categories_Forums</div>
<div class="a" style="left:556px;top:154px;width:191px;height:200px;background:#fdfdcf;border:1px solid #1a1a1a"></div>
<div class="a" style="left:556px;top:171px;width:191px;height:1px;background:#1a1a1a"></div>
<div class="t" style="left:351.5px;width:600px;text-align:center;top:155.59px;font-size:11.85px;line-height:15px;font-weight:bold">jForum_forums</div>
<div class="t" style="left:578.2px;top:173.90px;font-size:10.4px;line-height:14px;">forum_id : INTEGER</div>
<div class="t" style="left:578.2px;top:190.80px;font-size:10.4px;line-height:14px;">categories : INTEGER <span style='color:#c020c0'>*</span></div>
<div class="t" style="left:578.2px;top:207.70px;font-size:10.4px;line-height:14px;">forumn_name : VARCHAR (100)</div>
<div class="t" style="left:578.2px;top:224.60px;font-size:10.4px;line-height:14px;">forum_desc : VARCHAR (255)</div>
<div class="t" style="left:578.2px;top:241.50px;font-size:10.4px;line-height:14px;">forum_order : INTEGER</div>
<div class="t" style="left:578.2px;top:258.40px;font-size:10.4px;line-height:14px;">forum_topics : INTEGER</div>
<div class="t" style="left:578.2px;top:275.30px;font-size:10.4px;line-height:14px;">forum_last_post_id : INTEGER</div>
<div class="a" style="left:253px;top:547px;width:599px;height:18px;background:#f0f0f0;border:1px solid #acacac;border-radius:2px"></div>
<svg class="a" style="left:829px;top:552px;" width="11" height="10" viewBox="0 0 11 10"><path d="M3 0 H10 V6 H9 V1 H3 Z" fill="#000"/><path d="M0 3 H7 V9 H0 Z M1 4 V8 H6 V4 Z" fill="#000" fill-rule="evenodd"/></svg>
<div class="a" style="left:253px;top:566px;width:599px;height:106px;background:#fff"></div>
<div class="a" style="left:253px;top:672px;width:599px;height:1px;background:#a0a0a0"></div>
<div class="a" style="left:856px;top:81px;width:133px;height:18px;background:#f0f0f0;border:1px solid #a8a8a8;border-radius:2px"></div>
<svg class="a" style="left:861px;top:83px;" width="3" height="14" viewBox="0 0 3 14"><rect x="0" y="0" width="3" height="1" fill="#c4c4c4"/><rect x="0" y="2" width="3" height="1" fill="#c4c4c4"/><rect x="0" y="4" width="3" height="1" fill="#c4c4c4"/><rect x="0" y="6" width="3" height="1" fill="#c4c4c4"/><rect x="0" y="8" width="3" height="1" fill="#c4c4c4"/><rect x="0" y="10" width="3" height="1" fill="#c4c4c4"/><rect x="0" y="12" width="3" height="1" fill="#c4c4c4"/></svg>
<div class="t" style="left:869.6px;top:83.82px;font-size:10.9px;line-height:14px;color:#0a0a28">Palette</div>
<svg class="a" style="left:966px;top:87px;" width="11" height="10" viewBox="0 0 11 10"><path d="M3 0 H10 V6 H9 V1 H3 Z" fill="#000"/><path d="M0 3 H7 V9 H0 Z M1 4 V8 H6 V4 Z" fill="#000" fill-rule="evenodd"/></svg>
<div class="a" style="left:856px;top:101px;width:133px;height:343px;background:#fff;border:1px solid #828790"></div>
<div class="a" style="left:857px;top:444px;width:131px;height:2px;background:#e6e6e6"></div>
<div class="a" style="left:857px;top:102px;width:131px;height:23px;background:#eeeeee"></div>
<div class="a" style="left:857px;top:244px;width:131px;height:1px;background:#ebebeb"></div>
<div class="a" style="left:857px;top:246px;width:131px;height:23px;background:#eeeeee"></div>
<div class="a" style="left:857px;top:359px;width:131px;height:1px;background:#ebebeb"></div>
<svg class="a" style="left:862.5px;top:108.5px;" width="10" height="9" viewBox="0 0 10 9"><rect x="0.5" y="0.5" width="9" height="8" fill="#f4f4f4" stroke="#9a9a9a"/><rect x="2.5" y="4" width="5" height="1" fill="#2a4a9a"/></svg>
<svg class="a" style="left:862.5px;top:253.5px;" width="10" height="9" viewBox="0 0 10 9"><rect x="0.5" y="0.5" width="9" height="8" fill="#f4f4f4" stroke="#9a9a9a"/><rect x="2.5" y="4" width="5" height="1" fill="#2a4a9a"/></svg>
<div class="t" style="left:877.4px;top:106.13px;font-size:10.6px;line-height:14px;">Entities</div>
<div class="t" style="left:877.4px;top:251.03px;font-size:10.6px;line-height:14px;">Relationships</div>
<svg class="a" style="left:862px;top:127px;" width="30" height="24" viewBox="0 0 30 24"><rect x="0.5" y="0.5" width="29" height="23" fill="#fffad0" stroke="#c0c0a8"/><rect x="1" y="1" width="28" height="3" fill="#c4c4c4"/><rect x="6" y="1.5" width="12" height="2" fill="#222" opacity="0.8"/><rect x="2" y="1" width="2" height="2" fill="#e8c040"/><path d="M6 5.5 H8" stroke="#303030" stroke-width="1" opacity="0.7"/><path d="M10 5.5 H12" stroke="#303030" stroke-width="1" opacity="0.7"/><path d="M6 8.5 H11" stroke="#303030" stroke-width="1" opacity="0.7"/><path d="M12 8.5 H14" stroke="#303030" stroke-width="1" opacity="0.7"/><path d="M6 12.5 H15" stroke="#303030" stroke-width="1" opacity="0.7"/><path d="M16 12.5 H25" stroke="#303030" stroke-width="1" opacity="0.7"/><path d="M6 15.5 H10" stroke="#303030" stroke-width="1" opacity="0.7"/><path d="M11 15.5 H19" stroke="#303030" stroke-width="1" opacity="0.7"/><path d="M6 18.5 H9" stroke="#303030" stroke-width="1" opacity="0.7"/><path d="M10 18.5 H14" stroke="#303030" stroke-width="1" opacity="0.7"/><path d="M6 22.5 H11" stroke="#303030" stroke-width="1" opacity="0.7"/><path d="M12 22.5 H14" stroke="#303030" stroke-width="1" opacity="0.7"/><rect x="2" y="5" width="2" height="2" fill="#d8a020"/><rect x="2" y="12" width="2" height="2" fill="#d8a020"/></svg>
<svg class="a" style="left:863px;top:157px;" width="28" height="24" viewBox="0 0 28 24"><rect x="0.5" y="0.5" width="27" height="23" fill="#eeeefa" stroke="#b0b0c0"/><rect x="1" y="1" width="26" height="3" fill="#bcbcc8"/><rect x="6" y="1" width="14" height="3" fill="#777" opacity="0.6"/><path d="M6 5.5 H10" stroke="#6a6a90" stroke-width="1" opacity="0.7"/><path d="M11 5.5 H13" stroke="#6a6a90" stroke-width="1" opacity="0.7"/><path d="M6 8.5 H9" stroke="#6a6a90" stroke-width="1" opacity="0.7"/><path d="M6 11.5 H10" stroke="#6a6a90" stroke-width="1" opacity="0.7"/><path d="M11 11.5 H16" stroke="#6a6a90" stroke-width="1" opacity="0.7"/><path d="M6 14.5 H10" stroke="#6a6a90" stroke-width="1" opacity="0.7"/><path d="M11 14.5 H16" stroke="#6a6a90" stroke-width="1" opacity="0.7"/><path d="M6 17.5 H10" stroke="#6a6a90" stroke-width="1" opacity="0.7"/><path d="M6 20.5 H9" stroke="#6a6a90" stroke-width="1" opacity="0.7"/><path d="M10 20.5 H13" stroke="#6a6a90" stroke-width="1" opacity="0.7"/><path d="M6 22.5 H9" stroke="#6a6a90" stroke-width="1" opacity="0.7"/><path d="M10 22.5 H12" stroke="#6a6a90" stroke-width="1" opacity="0.7"/></svg>
<svg class="a" style="left:863px;top:187px;" width="28" height="24" viewBox="0 0 28 24"><rect x="0.5" y="0.5" width="27" height="23" fill="#fff" stroke="#a0a0a0"/><rect x="1" y="1" width="26" height="3" fill="#bdbdbd"/><rect x="6" y="1" width="14" height="3" fill="#666" opacity="0.5"/></svg>
<svg class="a" style="left:863px;top:217px;" width="28" height="24" viewBox="0 0 28 24"><rect x="0.5" y="0.5" width="27" height="23" fill="#f0f0f0" stroke="#8a8a8a"/><path d="M3 3.5 H10" stroke="#888"/></svg>
<div class="t" style="left:896.6px;top:132.23px;font-size:10.6px;line-height:14px;">Table</div>
<div class="t" style="left:896.6px;top:162.13px;font-size:10.6px;line-height:14px;">View</div>
<div class="t" style="left:896.6px;top:192.23px;font-size:10.6px;line-height:14px;">Note</div>
<div class="t" style="left:896.6px;top:222.43px;font-size:10.6px;line-height:14px;">Region</div>
<svg class="a" style="left:861px;top:277px;" width="32" height="18" viewBox="0 0 32 18"><path d="M1 1.5 H16.5 V12.5 H31" fill="none" stroke="#707070" stroke-width="1"/><path d="M31 8 L24.5 12.5 L31 17" fill="none" stroke="#707070" stroke-width="1"/></svg>
<svg class="a" style="left:861px;top:307px;" width="32" height="18" viewBox="0 0 32 18"><path d="M1 1.5 H16.5 V12.5 H31" fill="none" stroke="#707070" stroke-width="1" stroke-dasharray="3,2"/><path d="M31 8 L24.5 12.5 L31 17" fill="none" stroke="#707070" stroke-width="1"/></svg>
<svg class="a" style="left:869px;top:337px;" width="16" height="11" viewBox="0 0 16 11"><path d="M0.5 10.5 V7.5 A7.5 7 0 0 1 15.5 7.5 V10.5 Z" fill="none" stroke="#707070" stroke-width="1"/><path d="M3 2 L12.5 10.5 M13 2 L3.5 10.5" stroke="#707070" stroke-width="1"/></svg>
<div class="t" style="left:896.6px;top:276.93px;font-size:10.6px;line-height:14px;">One to Many</div>
<div class="t" style="left:896.6px;top:306.63px;font-size:10.6px;line-height:14px;">One to Many (NI)</div>
<div class="t" style="left:896.6px;top:336.83px;font-size:10.6px;line-height:14px;">Subcategory</div>
<div class="a" style="left:856px;top:450px;width:133px;height:18px;background:#f0f0f0;border:1px solid #a8a8a8;border-radius:2px"></div>
<svg class="a" style="left:861px;top:452px;" width="3" height="14" viewBox="0 0 3 14"><rect x="0" y="0" width="3" height="1" fill="#c4c4c4"/><rect x="0" y="2" width="3" height="1" fill="#c4c4c4"/><rect x="0" y="4" width="3" height="1" fill="#c4c4c4"/><rect x="0" y="6" width="3" height="1" fill="#c4c4c4"/><rect x="0" y="8" width="3" height="1" fill="#c4c4c4"/><rect x="0" y="10" width="3" height="1" fill="#c4c4c4"/><rect x="0" y="12" width="3" height="1" fill="#c4c4c4"/></svg>
<div class="t" style="left:869.6px;top:452.82px;font-size:10.9px;line-height:14px;color:#0a0a28">Overview</div>
<svg class="a" style="left:966px;top:456px;" width="11" height="10" viewBox="0 0 11 10"><path d="M3 0 H10 V6 H9 V1 H3 Z" fill="#000"/><path d="M0 3 H7 V9 H0 Z M1 4 V8 H6 V4 Z" fill="#000" fill-rule="evenodd"/></svg>
<div class="a" style="left:856px;top:469px;width:133px;height:203px;background:#fff"></div>
<div class="a" style="left:856px;top:672px;width:133px;height:1px;background:#a0a0a0"></div>
<div class="a" style="left:856px;top:470px;width:133px;height:1.5px;background:#f01414"></div>
<div class="a" style="left:856px;top:470px;width:1.5px;height:98px;background:#f01414"></div>
<div class="a" style="left:856px;top:566.5px;width:133px;height:1.5px;background:#f01414"></div>
<div class="a" style="left:986px;top:564px;width:3px;height:5px;background:#f01414"></div>
<svg class="a" style="left:858px;top:472px;" width="37" height="23" viewBox="0 0 37 23"><rect x="0.5" y="0.5" width="36" height="22" fill="#fdfdcf" stroke="#bdbd9a"/><path d="M0.5 4.5 H36.5" stroke="#9a9a80"/><path d="M8 2.5 H24" stroke="#302030" stroke-width="1" opacity="0.75"/><path d="M5 6.5 H13" stroke="#402030" stroke-width="1" opacity="0.8"/><path d="M18 6.5 H24" stroke="#402030" stroke-width="1" opacity="0.8"/><path d="M5 10.5 H8" stroke="#402030" stroke-width="1" opacity="0.8"/><path d="M11 10.5 H22" stroke="#402030" stroke-width="1" opacity="0.8"/><path d="M5 14.5 H12" stroke="#402030" stroke-width="1" opacity="0.8"/><path d="M17 14.5 H24" stroke="#402030" stroke-width="1" opacity="0.8"/><path d="M5 17.5 H12" stroke="#402030" stroke-width="1" opacity="0.8"/><path d="M15 17.5 H22" stroke="#402030" stroke-width="1" opacity="0.8"/></svg>
<svg class="a" style="left:923px;top:481px;" width="43" height="37" viewBox="0 0 43 37"><rect x="0.5" y="0.5" width="42" height="36" fill="#fdfdcf" stroke="#bdbd9a"/><path d="M0.5 4.5 H42.5" stroke="#9a9a80"/><path d="M13 2.5 H30" stroke="#302030" stroke-width="1" opacity="0.75"/><path d="M5 7.5 H11" stroke="#402030" stroke-width="1" opacity="0.8"/><path d="M14 7.5 H20" stroke="#402030" stroke-width="1" opacity="0.8"/><path d="M5 11.5 H10" stroke="#402030" stroke-width="1" opacity="0.8"/><path d="M13 11.5 H19" stroke="#402030" stroke-width="1" opacity="0.8"/><path d="M5 14.5 H14" stroke="#402030" stroke-width="1" opacity="0.8"/><path d="M16 14.5 H28" stroke="#402030" stroke-width="1" opacity="0.8"/><path d="M5 18.5 H14" stroke="#402030" stroke-width="1" opacity="0.8"/><path d="M16 18.5 H28" stroke="#402030" stroke-width="1" opacity="0.8"/><path d="M5 22.5 H12" stroke="#402030" stroke-width="1" opacity="0.8"/><path d="M15 22.5 H21" stroke="#402030" stroke-width="1" opacity="0.8"/><path d="M5 25.5 H12" stroke="#402030" stroke-width="1" opacity="0.8"/><path d="M15 25.5 H21" stroke="#402030" stroke-width="1" opacity="0.8"/><path d="M5 29.5 H16" stroke="#402030" stroke-width="1" opacity="0.8"/><path d="M18 29.5 H25" stroke="#402030" stroke-width="1" opacity="0.8"/><path d="M5 33.5 H12" stroke="#402030" stroke-width="1" opacity="0.8"/><path d="M15 33.5 H21" stroke="#402030" stroke-width="1" opacity="0.8"/></svg>
<svg class="a" style="left:895px;top:483px;" width="28" height="10" viewBox="0 0 28 10"><path d="M0 0.5 H14.5 V8.5 H28" fill="none" stroke="#e4e4e4"/></svg>
<div class="a" style="left:250px;top:285px;width:519px;height:370px;background:#8ec6f7;border:1px solid #6b9fd1"></div>
<svg class="a" style="left:261px;top:294px;" width="14" height="13" viewBox="0 0 14 13"><rect x="0.5" y="0.5" width="13" height="12" fill="#f4fbff" stroke="#b8944e"/><rect x="0" y="0" width="14" height="3" fill="#5aa0dc"/><rect x="1" y="1" width="12" height="1" fill="#d6ecfc"/><path d="M3 5 L6.5 10.5 M7.5 6 L11.5 9.5" stroke="#0d4a8a" stroke-width="0.8"/><g fill="#fff" stroke="#0d4a8a" stroke-width="1"><circle cx="2.6" cy="4.6" r="1.5"/><circle cx="7.5" cy="5.6" r="1.5"/><circle cx="6.5" cy="10.4" r="1.5"/><circle cx="11.5" cy="9.5" r="1.5"/></g></svg>
<div class="t" style="left:474.8px;top:291.94px;font-size:14.6px;line-height:19px;color:#1e1e1e">New Index</div>
<div class="a" style="left:731px;top:286px;width:31px;height:20px;background:#c75050"></div>
<svg class="a" style="left:742px;top:291.5px;" width="10" height="9" viewBox="0 0 10 9"><path d="M1.5 1.5 L8.5 8 M8.5 1.5 L1.5 8" stroke="#fff" stroke-width="1.6"/></svg>
<div class="a" style="left:257px;top:315px;width:505px;height:334px;background:#f0f0f0;border:1px solid #74ace4"></div>
<div class="a" style="left:268px;top:348px;width:483px;height:256px;border:1px solid #acacac;background:#f0f0f0"></div>
<div class="a" style="left:276px;top:328px;width:77px;height:21px;background:#e3e3e3;border:1px solid #acacac;border-bottom:none"></div>
<svg class="a" style="left:281px;top:330px;" width="16" height="15" viewBox="0 0 16 15"><rect x="2.5" y="1.5" width="12" height="9" fill="#fff" stroke="#b89058"/><path d="M2.5 4.5 H14.5 M2.5 7.5 H14.5 M6.5 1.5 V10.5 M10.5 1.5 V10.5" stroke="#b89058"/><circle cx="5" cy="10" r="4" fill="#6cb87a" stroke="#3f9a50"/></svg>
<div class="t" style="left:300.9px;top:331.70px;font-size:10.4px;line-height:14px;color:#0a0a20">General</div>
<svg class="a" style="left:357px;top:330px;" width="16" height="15" viewBox="0 0 16 15"><rect x="1.5" y="1.5" width="8" height="12" rx="1" fill="#fff3a0" stroke="#e0c040"/><rect x="4.5" y="7.5" width="11" height="6" rx="1.5" fill="#d8d8d8" stroke="#707070"/><rect x="11" y="9.5" width="2" height="2" fill="#3c3"/></svg>
<div class="t" style="left:377.3px;top:331.70px;font-size:10.4px;line-height:14px;color:#0a0a20">Options</div>
<svg class="a" style="left:436px;top:330px;" width="16" height="15" viewBox="0 0 16 15"><path d="M3.5 1.5 H14.5 L12.5 13.5 H1.5 Z" fill="#f4f4f4" stroke="#8a8a8a"/><path d="M5 4.5 H11.5 M5 6.5 H11 M4.5 8.5 H11 M4.5 10.5 H10.5" stroke="#4a90c8" stroke-width="1"/><circle cx="2.5" cy="12.5" r="1.6" fill="#fff" stroke="#8a8a8a"/></svg>
<div class="t" style="left:455.3px;top:331.70px;font-size:10.4px;line-height:14px;color:#0a0a20">Comments</div>
<svg class="a" style="left:526px;top:330px;" width="16" height="15" viewBox="0 0 16 15"><rect x="1.5" y="0.5" width="7" height="12" fill="#fff3a0" stroke="#e0b830"/><path d="M5.5 3.5 H14.5 L12.5 14.5 H3.5 Z" fill="#eeeeee" stroke="#8a8a8a"/><path d="M7 6.5 H11.5 M7 8.5 H11 M6.5 10.5 H11" stroke="#4a90c8"/></svg>
<div class="t" style="left:545.2px;top:331.70px;font-size:10.4px;line-height:14px;color:#0a0a20">SQL Preview</div>
<div class="a" style="left:428px;top:330px;width:1px;height:17px;background:#a8a8a8"></div>
<div class="a" style="left:518px;top:330px;width:1px;height:17px;background:#a8a8a8"></div>
<div class="a" style="left:618px;top:330px;width:1px;height:17px;background:#a8a8a8"></div>
<div class="a" style="left:340px;top:360px;width:399px;height:20px;background:#fff;border:1px solid #abadb3"></div>
<div class="t" style="left:279.7px;top:363.13px;font-size:10.6px;line-height:14px;">Name:</div>
<div class="t" style="left:342.6px;top:363.13px;font-size:10.6px;line-height:14px;">idx_dis_ord</div>
<div class="a" style="left:340px;top:385px;width:399px;height:20px;background:#fff;border:1px solid #abadb3"></div>
<div class="t" style="left:279.7px;top:388.13px;font-size:10.6px;line-height:14px;">Database:</div>
<div class="t" style="left:342.6px;top:388.13px;font-size:10.6px;line-height:14px;">sample</div>
<div class="a" style="left:340px;top:410px;width:399px;height:20px;background:#fff;border:1px solid #abadb3"></div>
<div class="t" style="left:279.7px;top:413.13px;font-size:10.6px;line-height:14px;">Schema:</div>
<div class="t" style="left:342.6px;top:413.13px;font-size:10.6px;line-height:14px;">db2nci</div>
<div class="a" style="left:340px;top:435px;width:399px;height:20px;background:#fff;border:1px solid #abadb3"></div>
<div class="t" style="left:279.7px;top:438.13px;font-size:10.6px;line-height:14px;">Table:</div>
<div class="t" style="left:342.6px;top:438.13px;font-size:10.6px;line-height:14px;">jForum_categories</div>
<div class="a" style="left:397px;top:363px;width:1px;height:14px;background:#000"></div>
<svg class="a" style="left:725px;top:444px;" width="9" height="6" viewBox="0 0 9 6"><path d="M1 1 L4.5 4.8 L8 1" fill="none" stroke="#444" stroke-width="2"/></svg>
<div class="t" style="left:279.7px;top:459.83px;font-size:10.6px;line-height:14px;">Indexed Columns</div>
<div class="a" style="left:280px;top:479px;width:459px;height:113px;background:#fff;border:1px solid #828790"></div>
<div class="a" style="left:281px;top:480px;width:457px;height:24px;background:#fafafa"></div>
<div class="a" style="left:281px;top:503px;width:457px;height:1px;background:#e6eef6"></div>
<div class="a" style="left:329px;top:480px;width:1px;height:23px;background:#e4e4e4"></div>
<div class="a" style="left:497px;top:480px;width:1px;height:23px;background:#e4e4e4"></div>
<div class="a" style="left:577px;top:480px;width:1px;height:23px;background:#e4e4e4"></div>
<div class="a" style="left:646px;top:480px;width:1px;height:23px;background:#e4e4e4"></div>
<div class="a" style="left:281px;top:504px;width:48px;height:64px;background:#efefef"></div>
<div class="a" style="left:329px;top:519px;width:409px;height:1px;background:#f0f0f0"></div>
<div class="a" style="left:329px;top:535px;width:409px;height:1px;background:#f0f0f0"></div>
<div class="a" style="left:329px;top:551px;width:409px;height:1px;background:#f0f0f0"></div>
<div class="a" style="left:329px;top:567px;width:409px;height:1px;background:#f0f0f0"></div>
<div class="a" style="left:497px;top:504px;width:1px;height:64px;background:#f0f0f0"></div>
<div class="a" style="left:577px;top:504px;width:1px;height:64px;background:#f0f0f0"></div>
<div class="a" style="left:646px;top:504px;width:1px;height:64px;background:#f0f0f0"></div>
<div class="t" style="left:335.6px;top:487.10px;font-size:10.4px;line-height:14px;">Column Name</div>
<div class="t" style="left:503px;top:487.10px;font-size:10.4px;line-height:14px;">Data Type</div>
<div class="t" style="left:582.4px;top:487.10px;font-size:10.4px;line-height:14px;">Sequence</div>
<div class="t" style="left:651.3px;top:487.10px;font-size:10.4px;line-height:14px;">Order</div>
<div class="a" style="left:578px;top:537px;width:68px;height:15px;background:#99c9f6"></div>
<div class="t" style="left:5px;width:600px;text-align:center;top:506.20px;font-size:10.4px;line-height:14px;">1</div>
<div class="t" style="left:330.6px;top:506.20px;font-size:10.4px;line-height:14px;">categories_id</div>
<div class="t" style="left:498.5px;top:506.20px;font-size:10.4px;line-height:14px;">INTEGER</div>
<div class="t" style="left:5px;width:600px;text-align:center;top:522.20px;font-size:10.4px;line-height:14px;">2</div>
<div class="t" style="left:330.6px;top:522.20px;font-size:10.4px;line-height:14px;">title</div>
<div class="t" style="left:498.5px;top:522.20px;font-size:10.4px;line-height:14px;">VARCHAR</div>
<div class="t" style="left:5px;width:600px;text-align:center;top:538.20px;font-size:10.4px;line-height:14px;">3</div>
<div class="t" style="left:330.6px;top:538.20px;font-size:10.4px;line-height:14px;">display_order</div>
<div class="t" style="left:498.5px;top:538.20px;font-size:10.4px;line-height:14px;">INTEGER</div>
<div class="t" style="left:5px;width:600px;text-align:center;top:554.20px;font-size:10.4px;line-height:14px;">4</div>
<div class="t" style="left:330.6px;top:554.20px;font-size:10.4px;line-height:14px;">moderated</div>
<div class="t" style="left:498.5px;top:554.20px;font-size:10.4px;line-height:14px;">INTEGER</div>
<div class="t" style="left:312px;width:600px;text-align:center;top:538.20px;font-size:10.4px;line-height:14px;color:#fff">1</div>
<div class="t" style="left:647px;top:538.20px;font-size:10.4px;line-height:14px;">ASCENDING</div>
<div class="a" style="left:596px;top:615px;width:73px;height:21px;background:linear-gradient(#f0f0f0,#e5e5e5);border:1px solid #3c9cf0"></div>
<div class="a" style="left:677px;top:615px;width:73px;height:21px;background:linear-gradient(#f0f0f0,#e5e5e5);border:1px solid #acacac"></div>
<div class="t" style="left:332.5px;width:600px;text-align:center;top:618.06px;font-size:10.8px;line-height:14px;">OK</div>
<div class="t" style="left:413.5px;width:600px;text-align:center;top:618.06px;font-size:10.8px;line-height:14px;">Cancel</div>
<svg class="a" style="left:360px;top:545px;" width="250" height="130" viewBox="0 0 250 130"><defs><clipPath id="cp"><path d="M18 28 H162 A10 10 0 0 1 172 38 V49 L240 7 L172 68 V112 A10 10 0 0 1 162 122 H18 A10 10 0 0 1 8 112 V38 A10 10 0 0 1 18 28 Z"/></clipPath><filter id="bl" x="-50%" y="-50%" width="200%" height="200%"><feGaussianBlur stdDeviation="4.5"/></filter></defs><path d="M18 28 H162 A10 10 0 0 1 172 38 V49 L240 7 L172 68 V112 A10 10 0 0 1 162 122 H18 A10 10 0 0 1 8 112 V38 A10 10 0 0 1 18 28 Z" fill="#3f9cf8"/><g clip-path="url(#cp)"><rect x="15" y="35" width="150" height="80" rx="4" fill="#fff" filter="url(#bl)"/></g><path d="M18 28 H162 A10 10 0 0 1 172 38 V49 L240 7 L172 68 V112 A10 10 0 0 1 162 122 H18 A10 10 0 0 1 8 112 V38 A10 10 0 0 1 18 28 Z" fill="none" stroke="#1a86f6" stroke-width="2"/></svg>
<div class="t" style="left:148px;width:600px;text-align:center;top:582.48px;font-size:14.2px;line-height:18px;font-weight:bold">Enter an Index name</div>
<div class="t" style="left:148px;width:600px;text-align:center;top:601.48px;font-size:14.2px;line-height:18px;font-weight:bold">and select the</div>
<div class="t" style="left:148px;width:600px;text-align:center;top:620.18px;font-size:14.2px;line-height:18px;font-weight:bold">columns to be</div>
<div class="t" style="left:148px;width:600px;text-align:center;top:638.78px;font-size:14.2px;line-height:18px;font-weight:bold">indexed</div>
</body></html>
